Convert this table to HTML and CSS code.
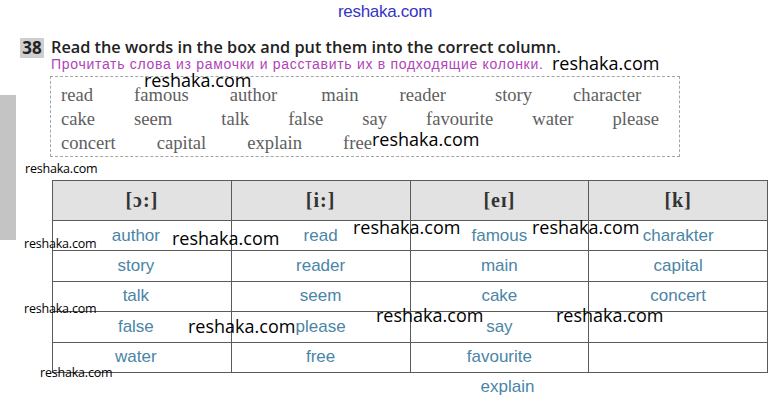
FILE: index.html
```html
<!DOCTYPE html>
<html>
<head>
<meta charset="utf-8">
<link rel="stylesheet" href="styles.css">
</head>
<body>
<div class="page">
  <div class="site">reshaka.com</div>
  <div class="task">
    <div class="num">38</div>
    <div class="titles">
      <div class="title">Read the words in the box and put them into the correct column.</div>
      <div class="sub">Прочитать слова из рамочки и расставить их в подходящие колонки.</div>
    </div>
  </div>
  <div class="box">
    <div class="row wide"><span>read</span><span>famous</span><span>author</span><span class="w3">main</span><span>reader</span><span class="w48">story</span><span>character</span></div>
    <div class="row"><span>cake</span><span>seem</span><span class="w50">talk</span><span>false</span><span>say</span><span>favourite</span><span>water</span><span>please</span></div>
    <div class="row wide"><span>concert</span><span>capital</span><span>explain</span><span>free</span></div>
  </div>
  <table class="sounds">
    <thead>
      <tr><th>[ɔ:]</th><th>[i:]</th><th>[eɪ]</th><th>[k]</th></tr>
    </thead>
    <tbody>
      <tr><td class="c1">author</td><td>read</td><td>famous</td><td>charakter</td></tr>
      <tr><td class="c1">story</td><td>reader</td><td>main</td><td>capital</td></tr>
      <tr><td class="c1">talk</td><td>seem</td><td>cake</td><td>concert</td></tr>
      <tr><td class="c1">false</td><td>please</td><td>say</td><td></td></tr>
      <tr><td class="c1">water</td><td>free</td><td>favourite</td><td></td></tr>
    </tbody>
  </table>
  <div class="extra"><span></span><span></span><span class="cell">explain</span><span></span></div>

  <div class="strip"></div>
  <span class="wm big" style="left:144px;top:71px">reshaka.com</span>
  <span class="wm big" style="left:552px;top:54px">reshaka.com</span>
  <span class="wm big" style="left:372px;top:130px">reshaka.com</span>
  <span class="wm small" style="left:25px;top:163px">reshaka.com</span>
  <span class="wm big" style="left:172px;top:229px">reshaka.com</span>
  <span class="wm small" style="left:24px;top:238px">reshaka.com</span>
  <span class="wm big" style="left:353px;top:218px">reshaka.com</span>
  <span class="wm big" style="left:532px;top:218px">reshaka.com</span>
  <span class="wm small" style="left:24px;top:303px">reshaka.com</span>
  <span class="wm big" style="left:188px;top:317px">reshaka.com</span>
  <span class="wm big" style="left:376px;top:306px">reshaka.com</span>
  <span class="wm big" style="left:556px;top:306px">reshaka.com</span>
  <span class="wm small" style="left:40px;top:367px">reshaka.com</span>
</div>
</body>
</html>
```
FILE: styles.css
```css
html, body {
  margin: 0;
  padding: 0;
  background: #fff;
}
.page {
  position: relative;
  width: 770px;
  height: 401px;
  overflow: hidden;
}
.site {
  height: 24px;
  line-height: 24px;
  text-align: center;
  font-family: "Liberation Sans", Arial, sans-serif;
  font-size: 17px;
  color: #3535c4;
  letter-spacing: -0.3px;
}
.task {
  display: flex;
  margin-top: 14px;
  padding-left: 20px;
}
.num {
  width: 24px;
  height: 20px;
  background: #cfcfcf;
  font-family: "Open Sans", sans-serif;
  font-weight: 700;
  font-size: 17px;
  line-height: 20px;
  text-align: center;
  color: #222;
}
.titles {
  margin-left: 7px;
}
.title {
  font-family: "Open Sans", sans-serif;
  font-weight: 600;
  font-size: 16.3px;
  line-height: 19px;
  color: #222;
}
.sub {
  font-family: "Liberation Sans", Arial, sans-serif;
  font-size: 14px;
  line-height: 14px;
  letter-spacing: 0.7px;
  color: #b044b8;
}
.box {
  margin: 5px 0 0 50px;
  width: 630px;
  border: 1px dashed #a5a5a5;
  padding: 6px 0 1px 10px;
  box-sizing: border-box;
  font-family: "Liberation Serif", "Times New Roman", serif;
  font-size: 18.6px;
  color: #606060;
}
.row {
  display: flex;
  gap: 39px;
  height: 24px;
  line-height: 24px;
}
.row.wide { gap: 41px; }
.row .w3 { margin-left: 3px; }
.row .w48 { margin-left: 8px; }
.row .w50 { margin-left: 10px; }
.sounds {
  margin: 23px 0 0 52px;
  width: 716px;
  border-collapse: collapse;
  table-layout: fixed;
  font-family: "Liberation Sans", Arial, sans-serif;
  font-size: 17px;
  color: #4a85a6;
}
.sounds th, .sounds td {
  border: 1.5px solid #5a5a5a;
  text-align: center;
  padding: 0;
}
.sounds th {
  height: 39px;
  background: #e2e2e2;
  font-family: "Liberation Serif", "Times New Roman", serif;
  font-weight: 700;
  font-size: 20px;
  letter-spacing: 1px;
  color: #333;
}
.sounds td {
  height: 29.4px;
}
.sounds td.c1 {
  padding-right: 12px;
}
.extra {
  margin-left: 52px;
  width: 716px;
  display: grid;
  grid-template-columns: repeat(4, 1fr);
  height: 28px;
  line-height: 28px;
  font-family: "Liberation Sans", Arial, sans-serif;
  font-size: 17px;
  color: #4a85a6;
}
.extra .cell {
  text-align: center;
  padding-left: 16px;
}
.strip {
  position: absolute;
  left: 0;
  top: 95px;
  width: 16px;
  height: 145px;
  background: #c4c4c4;
}
.wm {
  position: absolute;
  font-family: "Open Sans", sans-serif;
  color: #000;
  line-height: 1;
  white-space: nowrap;
}
.wm.big {
  font-size: 18px;
}
.wm.small {
  font-size: 12.5px;
  letter-spacing: -0.2px;
}
```
